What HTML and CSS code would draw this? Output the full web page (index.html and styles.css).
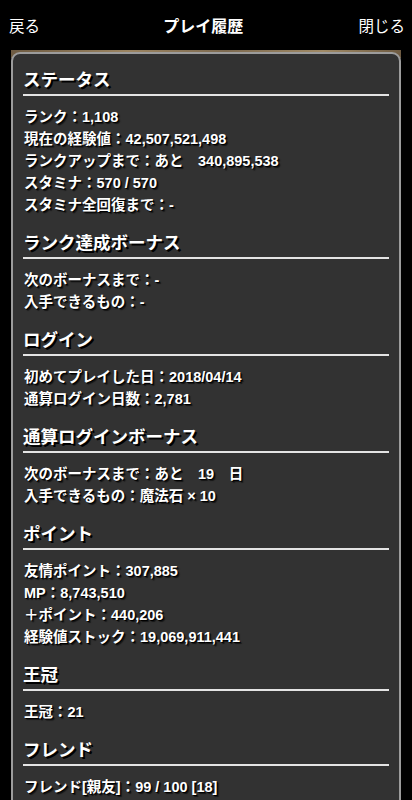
FILE: index.html
```html
<!DOCTYPE html>
<html lang="ja">
<head>
  <meta charset="UTF-8">
  <meta name="viewport" content="width=device-width, initial-scale=1">
  <title>プレイ履歴</title>
  <link rel="stylesheet" href="styles.css">
</head>
<body>
  <div class="topbar">
    <span class="nav-btn">戻る</span>
    <span class="title">プレイ履歴</span>
    <span class="nav-btn">閉じる</span>
  </div>

  <div class="stage">
    <div class="panel">
      <section class="block">
        <h2>ステータス</h2>
        <ul>
          <li>ランク：1,108</li>
          <li>現在の経験値：42,507,521,498</li>
          <li>ランクアップまで：あと　340,895,538</li>
          <li>スタミナ：570 / 570</li>
          <li>スタミナ全回復まで：-</li>
        </ul>
      </section>

      <section class="block">
        <h2>ランク達成ボーナス</h2>
        <ul>
          <li>次のボーナスまで：-</li>
          <li>入手できるもの：-</li>
        </ul>
      </section>

      <section class="block">
        <h2>ログイン</h2>
        <ul>
          <li>初めてプレイした日：2018/04/14</li>
          <li>通算ログイン日数：2,781</li>
        </ul>
      </section>

      <section class="block">
        <h2>通算ログインボーナス</h2>
        <ul>
          <li>次のボーナスまで：あと　19　日</li>
          <li>入手できるもの：魔法石 × 10</li>
        </ul>
      </section>

      <section class="block">
        <h2>ポイント</h2>
        <ul>
          <li>友情ポイント：307,885</li>
          <li>MP：8,743,510</li>
          <li>＋ポイント：440,206</li>
          <li>経験値ストック：19,069,911,441</li>
        </ul>
      </section>

      <section class="block">
        <h2>王冠</h2>
        <ul>
          <li>王冠：21</li>
        </ul>
      </section>

      <section class="block">
        <h2>フレンド</h2>
        <ul>
          <li>フレンド[親友]：99 / 100 [18]</li>
        </ul>
      </section>
    </div>
  </div>
</body>
</html>
```

FILE: styles.css
```css
body {
  margin: 0;
  background: #000;
  color: #fff;
  font-family: "Liberation Sans", "Noto Sans CJK JP", sans-serif;
  overflow: hidden;
}

.topbar {
  height: 50px;
  display: flex;
  align-items: center;
  justify-content: space-between;
  padding: 0 7px 0 9px;
  background: #000;
}

.nav-btn {
  font-size: 15.5px;
}

.title {
  font-size: 16px;
  font-weight: bold;
  margin-left: 8px;
}

.stage {
  margin: 0 11px;
  padding-top: 2px;
  background: linear-gradient(to right, #6e5b42, #9b8461 30%, #7d6a50 55%, #a08a66 80%, #6e5b42) top / 100% 8px no-repeat;
}

.panel {
  background: #323232;
  border: 2px solid #9c9c9c;
  border-radius: 9px;
  padding: 13px 10px 40px;
  min-height: 760px;
}

.block {
  margin-bottom: 14px;
}

.block h2 {
  margin: 0;
  font-size: 17.5px;
  line-height: 26px;
  font-weight: bold;
  padding-bottom: 1px;
  border-bottom: 2px solid #e4e4e4;
  text-shadow: 2px 2px 0 #000;
}

.block ul {
  list-style: none;
  margin: 10px 0 0;
  padding: 0;
}

.block li {
  font-size: 14.5px;
  line-height: 22px;
  font-weight: bold;
  padding-left: 1px;
  text-shadow: 1px 1px 0 #000, 2px 2px 1px rgba(0,0,0,0.6);
}
```
